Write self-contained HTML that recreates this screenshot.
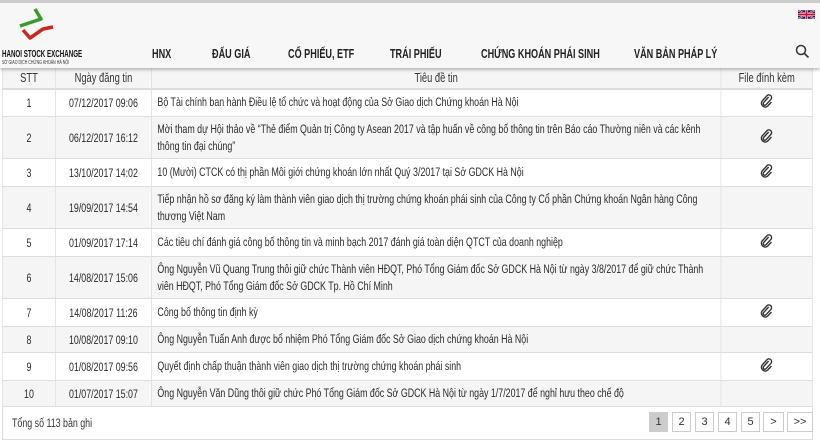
<!DOCTYPE html>
<html><head><meta charset="utf-8"><style>
*{margin:0;padding:0;box-sizing:border-box}
body{width:820px;height:443px;background:#fff;font-family:"Liberation Sans",sans-serif;color:#333;overflow:hidden;position:relative}
.top{position:absolute;left:0;top:0;width:820px;height:3px;background:#ccc}
.hdr{position:absolute;left:0;top:3px;width:820px;height:65px;background:#f7f7f7;box-shadow:0 2px 3px rgba(0,0,0,.25);z-index:2}
.nav{position:absolute;top:43px;font-weight:bold;font-size:13px;color:#222;white-space:nowrap;transform:scaleX(.7);transform-origin:left}
.brand{position:absolute;left:2px;top:46px;font-weight:bold;font-size:10px;color:#111;white-space:nowrap;transform:scaleX(.62);transform-origin:left}
.sub{position:absolute;left:2px;top:57px;font-size:5px;color:#333;white-space:nowrap;transform:scaleX(.72);transform-origin:left}
.wrap{position:absolute;left:2px;top:66px;width:1126px;transform:scaleX(.72);transform-origin:left top}
table{width:1126px;border-collapse:collapse;font-size:12.3px;color:#2a2a2a}
td,th{border:1px solid #ddd;vertical-align:middle}
th{height:22px;font-weight:normal;font-size:13px;color:#333;background:#f5f5f5;text-align:center;border-bottom:2px solid #ddd}
td.c{text-align:center}
td.t{padding:0 8px;line-height:17px}
tr.g td{background:#f5f5f5}
.foot{position:absolute;left:2px;top:406px;width:811px;height:34px;border:1px solid #ddd;border-top:none}
.foot span{position:absolute;left:9px;top:10px;font-size:12.3px;white-space:nowrap;transform:scaleX(.72);transform-origin:left}
.pg{position:absolute;top:6px;width:19px;height:20px;border:1px solid #ccc;font-size:11px;text-align:center;line-height:18px;color:#333;background:#fff}
.clip{display:inline-block;transform:scaleX(1.39);vertical-align:middle}
</style></head><body>
<div class="top"></div>
<div class="hdr">
<svg style="position:absolute;left:0;top:0" width="70" height="45" viewBox="0 0 70 45"><path d="M35 6 L41 16 L20 23" fill="none" stroke="#3a9a2a" stroke-width="3.5" stroke-linejoin="round"/><path d="M23 27 L30 35 L43 26 L53 24" fill="none" stroke="#c8281e" stroke-width="3.5" stroke-linejoin="round"/></svg>
<div class="brand">HANOI STOCK EXCHANGE</div>
<div class="sub">SỞ GIAO DỊCH CHỨNG KHOÁN HÀ NỘI</div>
<div class="nav" style="left:152px">HNX</div>
<div class="nav" style="left:212px">ĐẤU GIÁ</div>
<div class="nav" style="left:288px">CỔ PHIẾU, ETF</div>
<div class="nav" style="left:390px">TRÁI PHIẾU</div>
<div class="nav" style="left:481px">CHỨNG KHOÁN PHÁI SINH</div>
<div class="nav" style="left:634px">VĂN BẢN PHÁP LÝ</div>
<svg style="position:absolute;left:795px;top:41px" width="15" height="15" viewBox="0 0 15 15"><circle cx="6" cy="6" r="4.5" fill="none" stroke="#333" stroke-width="1.5"/><path d="M9.3 9.3 L13.5 13.5" stroke="#333" stroke-width="1.6"/></svg>
<svg style="position:absolute;left:798px;top:6px" width="17" height="11" viewBox="0 0 60 30"><rect width="60" height="30" fill="#012169"/><path d="M0 0L60 30M60 0L0 30" stroke="#fff" stroke-width="6"/><path d="M0 0L60 30M60 0L0 30" stroke="#C8102E" stroke-width="3"/><path d="M30 0V30M0 15H60" stroke="#fff" stroke-width="10"/><path d="M30 0V30M0 15H60" stroke="#C8102E" stroke-width="6"/></svg>
</div>
<div class="wrap">
<table>
<colgroup><col style="width:74px"><col style="width:133px"><col style="width:792px"><col style="width:127px"></colgroup>
<tr><th style="height:22px">STT</th><th>Ngày đăng tin</th><th>Tiêu đề tin</th><th>File đính kèm</th></tr>
<tr style="height:28px"><td class="c">1</td><td class="c">07/12/2017 09:06</td><td class="t">Bộ Tài chính ban hành Điều lệ tổ chức và hoạt động của Sở Giao dịch Chứng khoán Hà Nội</td><td class="c"><span class="clip"><svg width="14" height="14" viewBox="0 0 14 14"><path d="M9 3 L4 8.5 A1.6 1.6 0 0 0 6.3 10.8 L11.3 5.3 A2.7 2.7 0 0 0 7.5 1.5 L2.5 7 A3.8 3.8 0 0 0 7.8 12.3 L11.8 8" fill="none" stroke="#333" stroke-width="1.4"/></svg></span></td></tr>
<tr class="g" style="height:42px"><td class="c">2</td><td class="c">06/12/2017 16:12</td><td class="t">Mời tham dự Hội thảo về “Thẻ điểm Quản trị Công ty Asean 2017 và tập huấn về công bố thông tin trên Báo cáo Thường niên và các kênh thông tin đại chúng”</td><td class="c"><span class="clip"><svg width="14" height="14" viewBox="0 0 14 14"><path d="M9 3 L4 8.5 A1.6 1.6 0 0 0 6.3 10.8 L11.3 5.3 A2.7 2.7 0 0 0 7.5 1.5 L2.5 7 A3.8 3.8 0 0 0 7.8 12.3 L11.8 8" fill="none" stroke="#333" stroke-width="1.4"/></svg></span></td></tr>
<tr style="height:28px"><td class="c">3</td><td class="c">13/10/2017 14:02</td><td class="t">10 (Mười) CTCK có thị phần Môi giới chứng khoán lớn nhất Quý 3/2017 tại Sở GDCK Hà Nội</td><td class="c"><span class="clip"><svg width="14" height="14" viewBox="0 0 14 14"><path d="M9 3 L4 8.5 A1.6 1.6 0 0 0 6.3 10.8 L11.3 5.3 A2.7 2.7 0 0 0 7.5 1.5 L2.5 7 A3.8 3.8 0 0 0 7.8 12.3 L11.8 8" fill="none" stroke="#333" stroke-width="1.4"/></svg></span></td></tr>
<tr class="g" style="height:42px"><td class="c">4</td><td class="c">19/09/2017 14:54</td><td class="t">Tiếp nhận hồ sơ đăng ký làm thành viên giao dịch thị trường chứng khoán phái sinh của Công ty Cổ phần Chứng khoán Ngân hàng Công thương Việt Nam</td><td class="c"></td></tr>
<tr style="height:28px"><td class="c">5</td><td class="c">01/09/2017 17:14</td><td class="t">Các tiêu chí đánh giá công bố thông tin và minh bạch 2017 đánh giá toàn diện QTCT của doanh nghiệp</td><td class="c"><span class="clip"><svg width="14" height="14" viewBox="0 0 14 14"><path d="M9 3 L4 8.5 A1.6 1.6 0 0 0 6.3 10.8 L11.3 5.3 A2.7 2.7 0 0 0 7.5 1.5 L2.5 7 A3.8 3.8 0 0 0 7.8 12.3 L11.8 8" fill="none" stroke="#333" stroke-width="1.4"/></svg></span></td></tr>
<tr class="g" style="height:42px"><td class="c">6</td><td class="c">14/08/2017 15:06</td><td class="t">Ông Nguyễn Vũ Quang Trung thôi giữ chức Thành viên HĐQT, Phó Tổng Giám đốc Sở GDCK Hà Nội từ ngày 3/8/2017 để giữ chức Thành viên HĐQT, Phó Tổng Giám đốc Sở GDCK Tp. Hồ Chí Minh</td><td class="c"></td></tr>
<tr style="height:28px"><td class="c">7</td><td class="c">14/08/2017 11:26</td><td class="t">Công bố thông tin định kỳ</td><td class="c"><span class="clip"><svg width="14" height="14" viewBox="0 0 14 14"><path d="M9 3 L4 8.5 A1.6 1.6 0 0 0 6.3 10.8 L11.3 5.3 A2.7 2.7 0 0 0 7.5 1.5 L2.5 7 A3.8 3.8 0 0 0 7.8 12.3 L11.8 8" fill="none" stroke="#333" stroke-width="1.4"/></svg></span></td></tr>
<tr class="g" style="height:26px"><td class="c">8</td><td class="c">10/08/2017 09:10</td><td class="t">Ông Nguyễn Tuấn Anh được bổ nhiệm Phó Tổng Giám đốc Sở Giao dịch chứng khoán Hà Nội</td><td class="c"></td></tr>
<tr style="height:28px"><td class="c">9</td><td class="c">01/08/2017 09:56</td><td class="t">Quyết định chấp thuận thành viên giao dịch thị trường chứng khoán phái sinh</td><td class="c"><span class="clip"><svg width="14" height="14" viewBox="0 0 14 14"><path d="M9 3 L4 8.5 A1.6 1.6 0 0 0 6.3 10.8 L11.3 5.3 A2.7 2.7 0 0 0 7.5 1.5 L2.5 7 A3.8 3.8 0 0 0 7.8 12.3 L11.8 8" fill="none" stroke="#333" stroke-width="1.4"/></svg></span></td></tr>
<tr class="g" style="height:26px"><td class="c">10</td><td class="c">01/07/2017 15:07</td><td class="t">Ông Nguyễn Văn Dũng thôi giữ chức Phó Tổng Giám đốc Sở GDCK Hà Nội từ ngày 1/7/2017 để nghỉ hưu theo chế độ</td><td class="c"></td></tr>
</table>
</div>
<div class="foot"><span>Tổng số 113 bản ghi</span>
<div class="pg" style="left:646px;background:#ccc">1</div>
<div class="pg" style="left:669px">2</div>
<div class="pg" style="left:692px">3</div>
<div class="pg" style="left:715px">4</div>
<div class="pg" style="left:738px">5</div>
<div class="pg" style="left:760px;width:21px">&gt;</div>
<div class="pg" style="left:784px;width:26px">&gt;&gt;</div>
</div>
</body></html>
